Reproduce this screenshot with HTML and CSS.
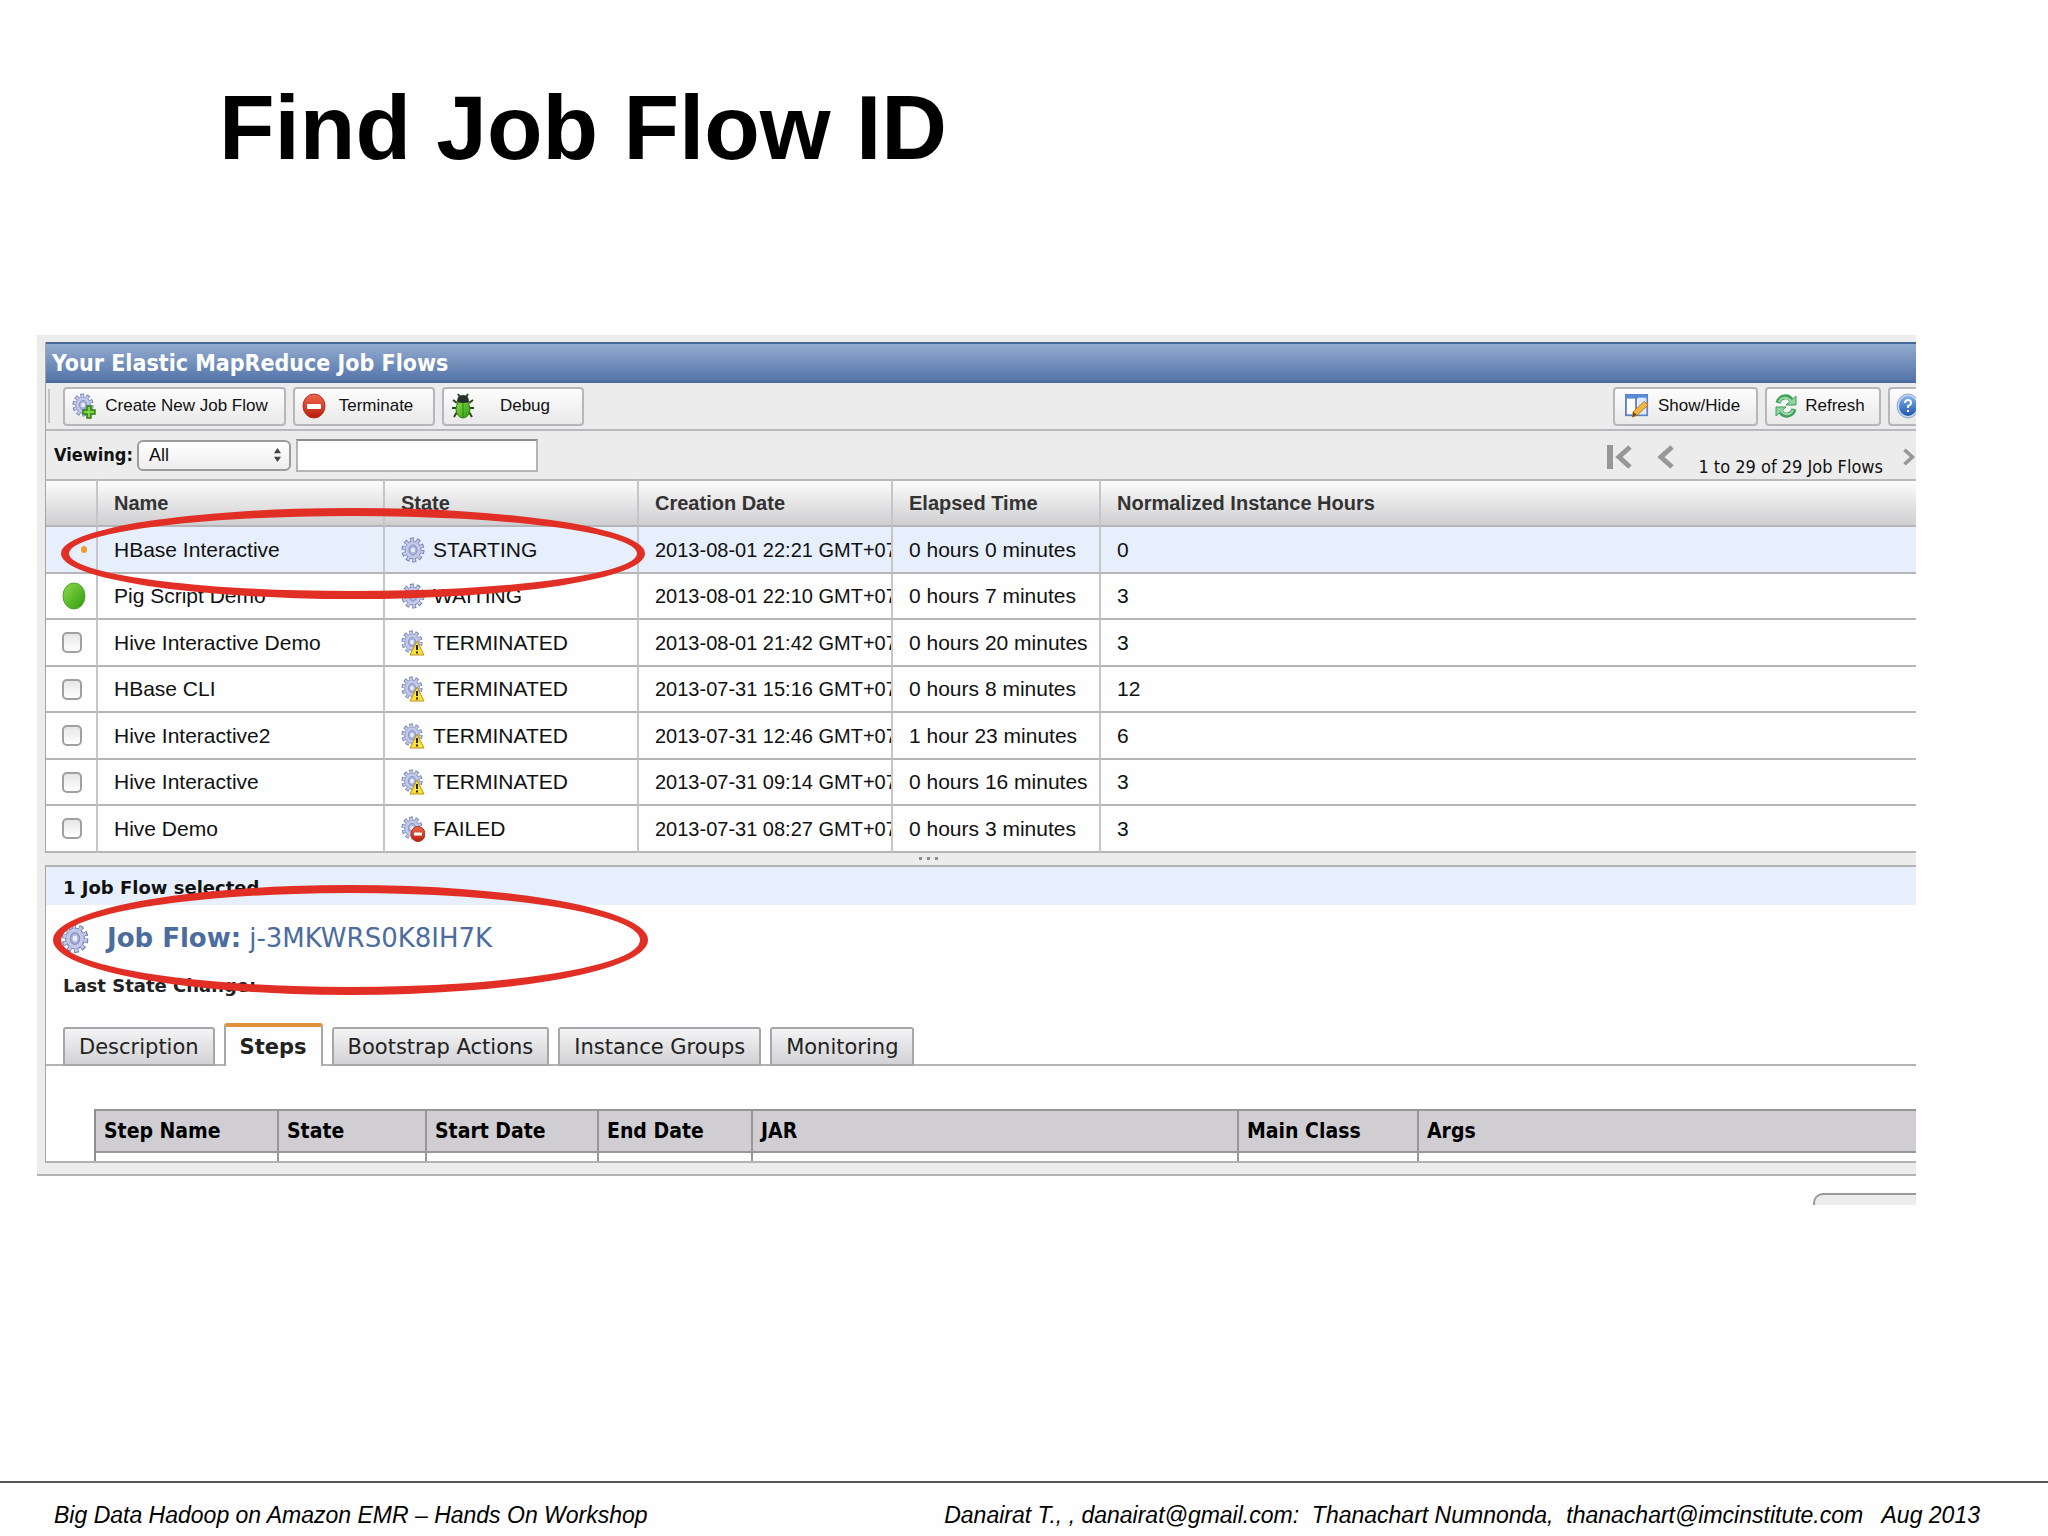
FILE: index.html
```html
<!DOCTYPE html>
<html lang="en">
	<head>
		<meta charset="utf-8" />
		<title>Find Job Flow ID</title>
		<link rel="stylesheet" href="styles.css">
	</head>
	<body>
		<svg class="defs" width="0" height="0">
			<defs>
				<linearGradient id="g-red" x1="0" y1="0" x2="0" y2="1"><stop offset="0" stop-color="#ee6a4c"/><stop offset="1" stop-color="#b91c0c"/></linearGradient>
				<linearGradient id="g-green" x1="0" y1="0" x2="1" y2="1"><stop offset="0" stop-color="#8fdc4a"/><stop offset="1" stop-color="#2f9a10"/></linearGradient>
				<linearGradient id="g-blue" x1="0" y1="0" x2="0" y2="1"><stop offset="0" stop-color="#7fb0ee"/><stop offset="1" stop-color="#1f56b0"/></linearGradient>
			</defs>
			<symbol id="gear" viewBox="0 0 24 26">
				<ellipse cx="12" cy="13" rx="9" ry="10" fill="none" stroke="#7480ad" stroke-width="5" stroke-dasharray="3.6 2.37"/>
				<ellipse cx="12" cy="13" rx="8" ry="9" fill="#c3c9ea" stroke="#7c88b6" stroke-width="1"/>
				<ellipse cx="12" cy="13" rx="9" ry="10" fill="none" stroke="#c3c9ea" stroke-width="3" stroke-dasharray="2.4 3.57" stroke-dashoffset="-.6"/>
				<ellipse cx="12" cy="13" rx="4" ry="5" fill="#a9b2da" stroke="#8992c0"/>
				<ellipse cx="12" cy="13" rx="2" ry="2.5" fill="#edf0fb"/>
			</symbol>
			<symbol id="gear-warn" viewBox="0 0 24 26">
				<use href="#gear" width="22" height="24"/>
				<path d="M16 11 L23 25 H9 Z" fill="#fbe23a" stroke="#b8961a" stroke-linejoin="round"/>
				<path d="M16 15 V20 M16 21.6 V23.4" stroke="#2d2300" stroke-width="2"/>
			</symbol>
			<symbol id="gear-fail" viewBox="0 0 24 26">
				<use href="#gear" width="22" height="24"/>
				<ellipse cx="17" cy="18" rx="7" ry="7.5" fill="url(#g-red)" stroke="#b0301c"/>
				<path d="M13 18 H21" stroke="#fff" stroke-width="3"/>
			</symbol>
			<symbol id="gear-add" viewBox="0 0 24 26">
				<use href="#gear" width="22" height="24"/>
				<path d="M15 13 H19 V17 H23 V21 H19 V25 H15 V21 H11 V17 H15 Z" fill="#7ed63f" stroke="#2b7a12" stroke-width="1.4"/>
			</symbol>
			<symbol id="stop" viewBox="0 0 24 26">
				<ellipse cx="12" cy="13" rx="11" ry="12" fill="url(#g-red)" stroke="#b3331d"/>
				<rect x="5" y="11" width="14" height="5" rx="1" fill="#fff"/>
			</symbol>
			<symbol id="bug" viewBox="0 0 24 26">
				<path d="M6 10 L2 7 M18 10 L22 7 M6 15 H1 M18 15 H23 M6 19 L3 24 M18 19 L21 24 M9 4 L7 1 M15 4 L17 1" stroke="#234b12" stroke-width="2" fill="none"/>
				<ellipse cx="12" cy="16" rx="7" ry="9" fill="url(#g-green)" stroke="#2b7a14"/>
				<path d="M12 9 V25" stroke="#2b8a14"/>
				<path d="M6 9 Q6 2 12 2 Q18 2 18 9 Q12 11 6 9 Z" fill="#26302a"/>
			</symbol>
			<symbol id="columns" viewBox="0 0 26 26">
				<rect x="1" y="1" width="23" height="22" fill="#fff" stroke="#5a82c4" stroke-width="2"/>
				<path d="M1 3 H24" stroke="#5a8ad6" stroke-width="4"/>
				<path d="M12 4 V23" stroke="#5a82c4" stroke-width="2"/>
				<path d="M14 4 H23 V22 H14 Z" fill="#dce9fa"/>
				<path d="M8 25 L9 19 L21 8 L25 12 L13 23 Z" fill="#f5b540" stroke="#b77a1c"/>
				<path d="M8 25 L9 19 L13 23 Z" fill="#7a4a20"/>
			</symbol>
			<symbol id="refresh" viewBox="0 0 24 26">
				<path d="M4 10 C6 3 14 2 17 7" fill="none" stroke="#3f9f5a" stroke-width="5"/>
				<path d="M22 3 V12 H12 Z" fill="#8fd6a0" stroke="#3f9f5a"/>
				<path d="M5 9 C7 4 13 3 17 8" fill="none" stroke="#9bdcab" stroke-width="2"/>
				<path d="M20 16 C18 23 10 24 7 19" fill="none" stroke="#3f9f5a" stroke-width="5"/>
				<path d="M2 23 V14 H12 Z" fill="#8fd6a0" stroke="#3f9f5a"/>
				<path d="M19 17 C17 22 11 23 7 18" fill="none" stroke="#9bdcab" stroke-width="2"/>
			</symbol>
			<symbol id="help" viewBox="0 0 24 26">
				<ellipse cx="12" cy="13" rx="11" ry="12" fill="#c4d4ea" stroke="#8fa6c8"/>
				<ellipse cx="12" cy="13" rx="9" ry="10" fill="url(#g-blue)"/>
				<path d="M9 10 Q9 7 12 7 Q15 7 15 10 Q15 12 12 13 V15 M12 17 V19" fill="none" stroke="#fff" stroke-width="2"/>
			</symbol>
			<symbol id="ball" viewBox="0 0 24 28">
				<ellipse cx="12" cy="14" rx="11" ry="13" fill="url(#g-green)" stroke="#4aa526"/>
			</symbol>
			<symbol id="first" viewBox="0 0 26 26">
				<path d="M4 1 V25" stroke="#979797" stroke-width="6"/>
				<path d="M24 3 L13 13 L24 23" fill="none" stroke="#979797" stroke-width="5"/>
			</symbol>
			<symbol id="prev" viewBox="0 0 18 26">
				<path d="M16 3 L5 13 L16 23" fill="none" stroke="#979797" stroke-width="5"/>
			</symbol>
			<symbol id="next" viewBox="0 0 18 26">
				<path d="M2 3 L13 13 L2 23" fill="none" stroke="#979797" stroke-width="5"/>
			</symbol>
		</svg>

		<h1 class="slide-title">Find Job Flow ID</h1>

		<div class="console">
			<div class="panel">
				<h2 class="panel-title">Your Elastic MapReduce Job Flows</h2>
				<div class="toolbar">
					<span class="handle"></span>
					<button class="btn btn-create" type="button"><svg class="icon"><use href="#gear-add"/></svg><span>Create New Job Flow</span></button>
					<button class="btn btn-small" type="button"><svg class="icon"><use href="#stop"/></svg><span>Terminate</span></button>
					<button class="btn btn-small" type="button"><svg class="icon"><use href="#bug"/></svg><span>Debug</span></button>
					<button class="btn btn-show" type="button"><svg class="icon"><use href="#columns"/></svg><span>Show/Hide</span></button>
					<button class="btn btn-refresh" type="button"><svg class="icon"><use href="#refresh"/></svg><span>Refresh</span></button>
					<button class="btn btn-help" type="button" aria-label="Help"><svg class="icon"><use href="#help"/></svg></button>
				</div>
				<div class="filter">
					<label for="viewing">Viewing:</label>
					<span class="select">
						<select id="viewing"><option>All</option></select>
						<svg class="arrows" viewBox="0 0 8 16"><path d="M0 6 L4 0 L8 6 Z M0 10 L4 16 L8 10 Z" fill="#444"/></svg>
					</span>
					<input class="search" type="text" aria-label="Search">
					<div class="pager">
						<button class="page-btn" type="button" aria-label="First"><svg class="page-first"><use href="#first"/></svg></button>
						<button class="page-btn" type="button" aria-label="Previous"><svg class="page-arrow"><use href="#prev"/></svg></button>
						<span class="page-text">1 to 29 of 29 Job Flows</span>
						<button class="page-btn page-last" type="button" aria-label="Next"><svg class="page-arrow"><use href="#next"/></svg></button>
					</div>
				</div>
				<div class="list">
					<table class="flows">
						<colgroup><col class="c-check"><col class="c-name"><col class="c-state"><col class="c-state"><col class="c-time"><col></colgroup>
						<thead>
							<tr><th></th><th>Name</th><th>State</th><th>Creation Date</th><th>Elapsed Time</th><th>Normalized Instance Hours</th></tr>
						</thead>
						<tbody>
							<tr class="selected"><td class="pick"><span class="spinner"></span></td><td>HBase Interactive</td><td><span class="state"><svg class="icon"><use href="#gear"/></svg>STARTING</span></td><td class="date">2013-08-01 22:21 GMT+07:00</td><td>0 hours 0 minutes</td><td>0</td></tr>
							<tr><td class="pick"><svg class="ball"><use href="#ball"/></svg></td><td>Pig Script Demo</td><td><span class="state"><svg class="icon"><use href="#gear"/></svg>WAITING</span></td><td class="date">2013-08-01 22:10 GMT+07:00</td><td>0 hours 7 minutes</td><td>3</td></tr>
							<tr><td class="pick"><input type="checkbox" aria-label="Hive Interactive Demo"></td><td>Hive Interactive Demo</td><td><span class="state"><svg class="icon"><use href="#gear-warn"/></svg>TERMINATED</span></td><td class="date">2013-08-01 21:42 GMT+07:00</td><td>0 hours 20 minutes</td><td>3</td></tr>
							<tr><td class="pick"><input type="checkbox" aria-label="HBase CLI"></td><td>HBase CLI</td><td><span class="state"><svg class="icon"><use href="#gear-warn"/></svg>TERMINATED</span></td><td class="date">2013-07-31 15:16 GMT+07:00</td><td>0 hours 8 minutes</td><td>12</td></tr>
							<tr><td class="pick"><input type="checkbox" aria-label="Hive Interactive2"></td><td>Hive Interactive2</td><td><span class="state"><svg class="icon"><use href="#gear-warn"/></svg>TERMINATED</span></td><td class="date">2013-07-31 12:46 GMT+07:00</td><td>1 hour 23 minutes</td><td>6</td></tr>
							<tr><td class="pick"><input type="checkbox" aria-label="Hive Interactive"></td><td>Hive Interactive</td><td><span class="state"><svg class="icon"><use href="#gear-warn"/></svg>TERMINATED</span></td><td class="date">2013-07-31 09:14 GMT+07:00</td><td>0 hours 16 minutes</td><td>3</td></tr>
							<tr><td class="pick"><input type="checkbox" aria-label="Hive Demo"></td><td>Hive Demo</td><td><span class="state"><svg class="icon"><use href="#gear-fail"/></svg>FAILED</span></td><td class="date">2013-07-31 08:27 GMT+07:00</td><td>0 hours 3 minutes</td><td>3</td></tr>
						</tbody>
					</table>
					<div class="ring ring-row"></div>
				</div>
			</div>

			<div class="splitter"><i></i><i></i><i></i></div>

			<div class="panel detail">
				<p class="selected-count">1 Job Flow selected</p>
				<h3 class="flow-id"><svg class="icon-lg"><use href="#gear"/></svg><b>Job Flow:</b><span>j-3MKWRS0K8IH7K</span></h3>
				<p class="last-change"><b>Last State Change:</b> -</p>
				<div class="ring ring-id"></div>
				<div class="tabs">
					<button class="tab" type="button">Description</button>
					<button class="tab active" type="button">Steps</button>
					<button class="tab" type="button">Bootstrap Actions</button>
					<button class="tab" type="button">Instance Groups</button>
					<button class="tab" type="button">Monitoring</button>
				</div>
				<table class="steps">
					<colgroup><col class="s-name"><col class="s-state"><col class="s-start"><col class="s-end"><col class="s-jar"><col class="s-main"><col></colgroup>
					<thead>
						<tr><th>Step Name</th><th>State</th><th>Start Date</th><th>End Date</th><th>JAR</th><th>Main Class</th><th>Args</th></tr>
					</thead>
					<tbody>
						<tr><td></td><td></td><td></td><td></td><td></td><td></td><td></td></tr>
					</tbody>
				</table>
			</div>
		</div>
		<div class="below"><span class="cut-button"></span></div>

		<div class="footer">
			<span>Big Data Hadoop on Amazon EMR – Hands On Workshop</span>
			<span class="authors">Danairat T., , danairat@gmail.com:  Thanachart Numnonda,  thanachart@imcinstitute.com   Aug 2013</span>
		</div>
	</body>
</html>
```

FILE: styles.css
```css
*{box-sizing:border-box}
body,h1,h2,h3,p{margin:0;padding:0}
body{
	min-height:100vh;
	display:flex;
	flex-direction:column;
	background:#fefefe;
	color:#111;
	font-family:"Liberation Sans",Arial,sans-serif;
	font-size:20px;
}
button,select,input{font-family:inherit;color:inherit}
.defs{position:absolute}
.slide-title{
	padding:76px 0 0 219px;
	height:335px;
	font-size:91px;
	line-height:104px;
	color:#000;
}

/* console window */
.console{
	margin:0 132px 0 37px;
	padding:7px 0 11px 8px;
	background:#ececed;
	border-bottom:2px solid #b3b2b5;
	overflow:hidden;
}
.panel{
	border-left:1px solid #a5a5a8;
	position:relative;
}
.panel-title{
	height:41px;
	padding-left:6px;
	border-top:2px solid #4a6797;
	border-bottom:2px solid #4f6a9c;
	background:linear-gradient(#93abd0,#5474a8);
	color:#fff;
	font:bold 23px/38px "DejaVu Sans Condensed","DejaVu Sans",sans-serif;
	white-space:nowrap;
}
.toolbar{
	display:flex;
	align-items:center;
	gap:7px;
	height:48px;
	border-bottom:2px solid #b9b9bb;
	overflow:hidden;
}
.handle{
	width:2px;
	height:34px;
	margin:0 6px 0 2px;
	background:#c4c4c6;
}
.btn{
	flex:none;
	display:flex;
	align-items:center;
	height:39px;
	padding:0 7px;
	border:2px solid #b7b7b9;
	border-radius:4px;
	background:linear-gradient(#fdfdfd,#e9e9ea);
	font-size:17px;
	white-space:nowrap;
}
.btn span{flex:1;text-align:center}
.icon{
	flex:none;
	width:24px;
	height:26px;
}
.btn-create{width:223px}
.btn-small{width:142px}
.btn-show{width:145px;margin-left:auto;padding-left:10px}
.btn-refresh{width:116px}
.btn-help{
	width:28px;
	padding:0 0 0 6px;
	border-right:0;
	border-radius:4px 0 0 4px;
	overflow:hidden;
}
.filter{
	display:flex;
	align-items:center;
	height:48px;
	padding-left:8px;
	overflow:hidden;
}
.filter label{
	width:83px;
	font:bold 18px/24px "DejaVu Sans Condensed","DejaVu Sans",sans-serif;
}
.select{
	position:relative;
	width:154px;
	margin-right:5px;
}
.select select{
	display:block;
	width:100%;
	height:31px;
	padding:0 10px;
	border:2px solid #9b9b9d;
	border-radius:6px;
	background:linear-gradient(#fff,#ededee);
	font-size:18px;
	appearance:none;
}
.arrows{
	position:absolute;
	right:10px;
	top:8px;
	width:7px;
	height:14px;
}
.search{
	width:242px;
	height:33px;
	border:2px solid #b4b4b6;
	border-top-color:#8d8d90;
	background:#fff;
}
.pager{
	display:flex;
	align-items:center;
	margin-left:auto;
	padding-top:4px;
}
.page-btn{
	display:flex;
	padding:0;
	margin-right:24px;
	border:0;
	background:none;
}
.page-first{width:26px;height:26px}
.page-arrow{width:18px;height:26px}
.page-text{
	padding-top:20px;
	font:18px/24px "DejaVu Sans Condensed","DejaVu Sans",sans-serif;
	white-space:nowrap;
}
.page-last{
	width:13px;
	margin:0 0 0 20px;
	overflow:hidden;
}

/* job flow list */
.list{position:relative}
.flows,.steps{
	width:100%;
	table-layout:fixed;
	border-collapse:separate;
	border-spacing:0;
}
.c-check{width:52px}
.c-name{width:287px}
.c-state{width:254px}
.c-time{width:208px}
.flows th,.flows td{
	height:47px;
	padding:0 0 0 16px;
	border-right:2px solid #c6c6c8;
	border-bottom:2px solid #b5b5b8;
	background:#fefefe;
	text-align:left;
	line-height:24px;
	white-space:nowrap;
	overflow:hidden;
}
.flows td{font-size:21px}
.flows tr:nth-child(even) td{height:46px}
.flows th:last-child,.flows td:last-child{border-right:0}
.flows th{
	height:48px;
	border-top:2px solid #b9b9bb;
	background:linear-gradient(#fcfcfc,#cfcfd1);
	color:#333;
}
.flows .date{font-size:20px}
.flows .selected td{background:#e6effb}
.pick input{
	display:block;
	width:20px;
	height:21px;
	margin:0;
	border:2px solid #a0a0a2;
	border-radius:5px;
	background:linear-gradient(#e6e6e6,#fff);
	appearance:none;
}
.ball{
	display:block;
	width:24px;
	height:28px;
}
.spinner{
	display:block;
	width:6px;
	height:7px;
	margin-left:19px;
	border-radius:50%;
	background:#f39a2c;
}
.state{
	display:flex;
	align-items:center;
	gap:8px;
}
.ring{
	position:absolute;
	border:8px solid #e22f26;
	border-radius:50%;
}
.ring-row{
	left:15px;
	top:29px;
	width:584px;
	height:91px;
}
.ring-id{
	left:7px;
	top:18px;
	width:595px;
	height:110px;
}

.splitter{
	display:flex;
	justify-content:center;
	gap:5px;
	height:12px;
	padding:4px 104px 0 0;
}
.splitter i{
	width:3px;
	height:3px;
	background:#8f8f92;
}

/* selected flow */
.detail{
	border-top:2px solid #b3b3b6;
	border-bottom:2px solid #b3b3b6;
	background:#fefefe;
	font-family:"DejaVu Sans",Verdana,sans-serif;
}
.selected-count{
	height:38px;
	padding-left:17px;
	background:#e6effb;
	font-size:18px;
	font-weight:bold;
	line-height:42px;
}
.flow-id{
	display:flex;
	align-items:center;
	height:66px;
	padding-left:15px;
	color:#4d6c9e;
	font-size:26px;
	font-weight:normal;
}
.flow-id b{margin:0 8px 0 18px}
.icon-lg{width:28px;height:31px}
.last-change{
	padding-left:17px;
	font-size:18px;
	line-height:30px;
	color:#222;
}
.tabs{
	display:flex;
	align-items:flex-end;
	gap:9px;
	height:65px;
	padding-left:17px;
	box-shadow:inset 0 -2px #b3b3b6;
}
.tab{
	height:39px;
	padding:0 14px;
	border:2px solid #a6a6a9;
	border-radius:3px 3px 0 0;
	background:linear-gradient(#f4f4f5,#d2d2d5);
	color:#222;
	font-size:21px;
	white-space:nowrap;
}
.tab.active{
	height:43px;
	border-top:4px solid #e0913a;
	border-bottom:0;
	background:#fefefe;
	font-weight:bold;
}
.steps{
	width:auto;
	min-width:calc(100% - 48px);
	margin:43px 0 0 48px;
	border-left:2px solid #8f8f92;
}
.s-name{width:183px}
.s-state{width:148px}
.s-start{width:172px}
.s-end{width:154px}
.s-jar{width:486px}
.s-main{width:180px}
.steps th{
	height:44px;
	padding:0 0 0 8px;
	border-top:2px solid #97979a;
	border-right:2px solid #97979a;
	border-bottom:2px solid #97979a;
	background:#d0ced2;
	color:#000;
	font-family:"DejaVu Sans Condensed","DejaVu Sans",sans-serif;
	font-size:21px;
	line-height:24px;
	text-align:left;
	white-space:nowrap;
}
.steps td{
	height:8px;
	padding:0;
	border-right:2px solid #97979a;
}
.steps th:last-child,.steps td:last-child{border-right:0}

/* top edge of a button cut off under the window */
.below{
	display:flex;
	justify-content:flex-end;
	margin-right:132px;
	padding-top:17px;
}
.cut-button{
	width:103px;
	height:12px;
	border:2px solid #99999c;
	border-width:2px 0 0 2px;
	border-radius:10px 0 0 0;
	background:#ececed;
}

.footer{
	display:flex;
	justify-content:space-between;
	height:55px;
	margin-top:auto;
	padding:0 68px 0 54px;
	border-top:2px solid #555;
	color:#000;
	font-size:23px;
	font-style:italic;
	line-height:64px;
	white-space:nowrap;
}
.authors{white-space:pre}
```
